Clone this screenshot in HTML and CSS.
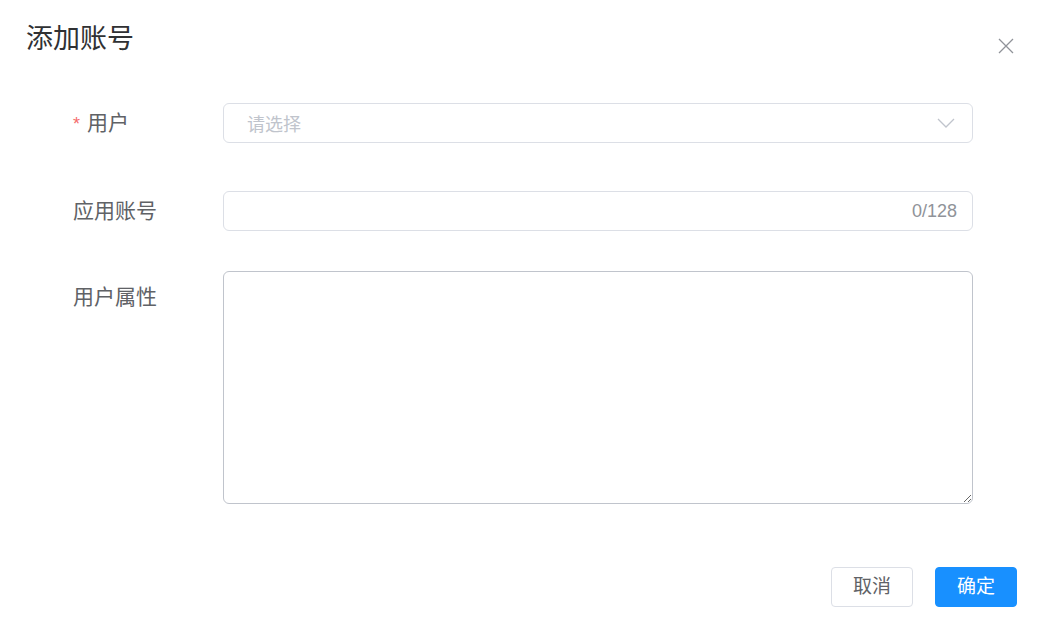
FILE: index.html
```html
<!DOCTYPE html>
<html lang="zh-CN">
<head>
    <meta charset="UTF-8">
    <meta name="viewport" content="width=device-width, initial-scale=1.0">
    <title>添加账号</title>
    <link rel="stylesheet" href="styles.css">
</head>
<body>
    <div class="dialog">
        <div class="dialog-header">
            <span class="dialog-title">添加账号</span>
            <button class="dialog-close" aria-label="关闭">
                <svg width="16" height="16" viewBox="0 0 16 16">
                    <path d="M1 1 L15 15 M15 1 L1 15" stroke="#909399" stroke-width="1.3" fill="none"/>
                </svg>
            </button>
        </div>

        <form class="account-form">
            <div class="form-item item-user">
                <label class="form-label"><span class="required">*</span>用户</label>
                <div class="form-control">
                    <div class="select">
                        <span class="placeholder">请选择</span>
                        <svg class="arrow" width="18" height="10" viewBox="0 0 18 10">
                            <path d="M1 1 L9 9 L17 1" stroke="#c0c4cc" stroke-width="1.3" fill="none"/>
                        </svg>
                    </div>
                </div>
            </div>

            <div class="form-item item-account">
                <label class="form-label" for="account">应用账号</label>
                <div class="form-control">
                    <div class="input">
                        <input type="text" id="account" maxlength="128">
                        <span class="count">0/128</span>
                    </div>
                </div>
            </div>

            <div class="form-item item-attrs">
                <label class="form-label" for="attrs">用户属性</label>
                <div class="form-control">
                    <textarea id="attrs" class="textarea"></textarea>
                </div>
            </div>
        </form>

        <div class="dialog-footer">
            <button class="btn">取消</button>
            <button class="btn btn-primary">确定</button>
        </div>
    </div>
</body>
</html>
```

FILE: styles.css
```css
body {
    margin: 0;
    padding: 0;
    background-color: #fff;
    font-family: "Liberation Sans", "Noto Sans CJK SC", sans-serif;
    color: #606266;
}

.dialog {
    width: 1048px;
    height: 636px;
    background-color: #fff;
    box-sizing: border-box;
}

.dialog-header {
    display: flex;
    justify-content: space-between;
    align-items: flex-start;
    padding: 22px 34px 0 26px;
    height: 103px;
    box-sizing: border-box;
}

.dialog-title {
    font-size: 27px;
    line-height: 34px;
    color: #303133;
}

.dialog-close {
    border: none;
    background: none;
    padding: 0;
    margin-top: 16px;
    width: 16px;
    height: 16px;
    cursor: pointer;
}

.dialog-close svg {
    display: block;
}

.account-form {
    padding-left: 73px;
}

.form-item {
    display: flex;
}

.item-user {
    margin-bottom: 47px;
}

.item-account {
    margin-bottom: 40px;
}

.form-label {
    width: 150px;
    font-size: 21px;
    line-height: 40px;
    color: #606266;
}

.item-attrs .form-label {
    padding-top: 6px;
}

.required {
    color: #f56c6c;
    margin-right: 7px;
    font-size: 18px;
}

.form-control {
    width: 750px;
}

.select,
.input {
    height: 40px;
    border: 1px solid #dcdfe6;
    border-radius: 6px;
    box-sizing: border-box;
    display: flex;
    align-items: center;
    padding: 0 15px 0 23px;
}

.placeholder {
    flex: 1;
    font-size: 18px;
    color: #c0c4cc;
}

.arrow {
    margin-right: 2px;
}

.input input {
    flex: 1;
    border: none;
    outline: none;
    font-size: 18px;
    padding: 0;
    background: none;
}

.count {
    font-size: 18px;
    color: #909399;
}

.textarea {
    display: block;
    width: 750px;
    height: 233px;
    box-sizing: border-box;
    border: 1px solid #c0c4cc;
    border-radius: 6px;
    padding: 8px 23px;
    font-size: 18px;
    font-family: inherit;
    outline: none;
    resize: vertical;
}

.dialog-footer {
    display: flex;
    justify-content: flex-end;
    gap: 22px;
    padding: 63px 31px 0 0;
}

.btn {
    width: 82px;
    height: 40px;
    border: 1px solid #dcdfe6;
    border-radius: 4px;
    background-color: #fff;
    color: #606266;
    font-size: 19px;
    font-family: inherit;
    line-height: 1;
    padding: 0 0 2px;
    cursor: pointer;
}

.btn-primary {
    background-color: #1890ff;
    border-color: #1890ff;
    color: #fff;
}
```
